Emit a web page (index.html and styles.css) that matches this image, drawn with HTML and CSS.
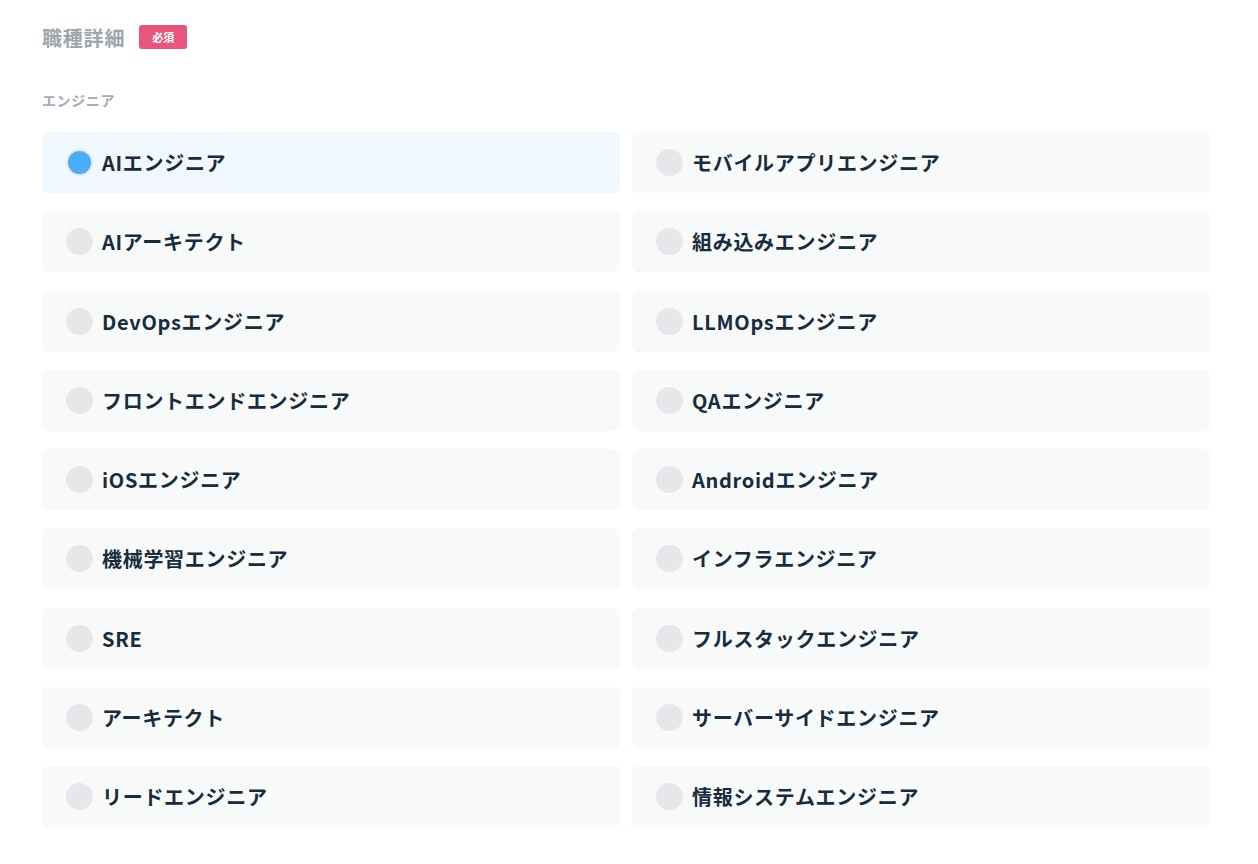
FILE: index.html
```html
<!DOCTYPE html>
<html lang="ja">
<head>
<meta charset="utf-8">
<title>職種詳細</title>
<link rel="stylesheet" href="styles.css">
</head>
<body>
<div class="field">
  <div class="field-head">
    <h2 class="field-title">職種詳細</h2>
    <span class="badge">必須</span>
  </div>
  <p class="group-label">エンジニア</p>
  <div class="options">
    <label class="option selected"><input type="radio" name="job" checked><span class="dot"></span>AIエンジニア</label>
    <label class="option"><input type="radio" name="job"><span class="dot"></span>モバイルアプリエンジニア</label>
    <label class="option"><input type="radio" name="job"><span class="dot"></span>AIアーキテクト</label>
    <label class="option"><input type="radio" name="job"><span class="dot"></span>組み込みエンジニア</label>
    <label class="option"><input type="radio" name="job"><span class="dot"></span>DevOpsエンジニア</label>
    <label class="option"><input type="radio" name="job"><span class="dot"></span>LLMOpsエンジニア</label>
    <label class="option"><input type="radio" name="job"><span class="dot"></span>フロントエンドエンジニア</label>
    <label class="option"><input type="radio" name="job"><span class="dot"></span>QAエンジニア</label>
    <label class="option"><input type="radio" name="job"><span class="dot"></span>iOSエンジニア</label>
    <label class="option"><input type="radio" name="job"><span class="dot"></span>Androidエンジニア</label>
    <label class="option"><input type="radio" name="job"><span class="dot"></span>機械学習エンジニア</label>
    <label class="option"><input type="radio" name="job"><span class="dot"></span>インフラエンジニア</label>
    <label class="option"><input type="radio" name="job"><span class="dot"></span>SRE</label>
    <label class="option"><input type="radio" name="job"><span class="dot"></span>フルスタックエンジニア</label>
    <label class="option"><input type="radio" name="job"><span class="dot"></span>アーキテクト</label>
    <label class="option"><input type="radio" name="job"><span class="dot"></span>サーバーサイドエンジニア</label>
    <label class="option"><input type="radio" name="job"><span class="dot"></span>リードエンジニア</label>
    <label class="option"><input type="radio" name="job"><span class="dot"></span>情報システムエンジニア</label>
  </div>
</div>
</body>
</html>
```

FILE: styles.css
```css
body {
    margin: 0;
    background: #fff;
    font-family: "Noto Sans CJK JP", "Noto Sans", sans-serif;
}
.field {
    padding: 22px 48px 0 42px;
}
.field-head {
    display: flex;
    align-items: center;
    gap: 14px;
    height: 30px;
}
.field-title {
    margin: 0;
    font-size: 20px;
    font-weight: 700;
    color: #9ba6ae;
    letter-spacing: 0.8px;
}
.badge {
    display: inline-flex;
    align-items: center;
    justify-content: center;
    width: 48px;
    height: 24px;
    border-radius: 3px;
    background: #e8567b;
    color: #fff;
    font-size: 11px;
    font-weight: 700;
}
.group-label {
    margin: 38px 0 0;
    font-size: 14px;
    font-weight: 700;
    color: #a3adb5;
    line-height: 20px;
    letter-spacing: 0.6px;
}
.options {
    display: grid;
    grid-template-columns: 1fr 1fr;
    column-gap: 12px;
    row-gap: 18.25px;
    margin-top: 22px;
}
.option {
    display: flex;
    align-items: center;
    height: 61px;
    padding: 0 24px;
    border-radius: 6px;
    background: #f8fafa;
    color: #172c3c;
    font-size: 20px;
    font-weight: 700;
    letter-spacing: 0.7px;
    cursor: pointer;
}
.option.selected {
    background: #f1f8fd;
}
.option input {
    display: none;
}
.dot {
    width: 27px;
    height: 27px;
    box-sizing: border-box;
    border-radius: 50%;
    background: #e5e7eb;
    margin-right: 9px;
    flex-shrink: 0;
}
.option.selected .dot {
    background: #4aaef6;
    border: 2px solid #e5e7eb;
}
```
